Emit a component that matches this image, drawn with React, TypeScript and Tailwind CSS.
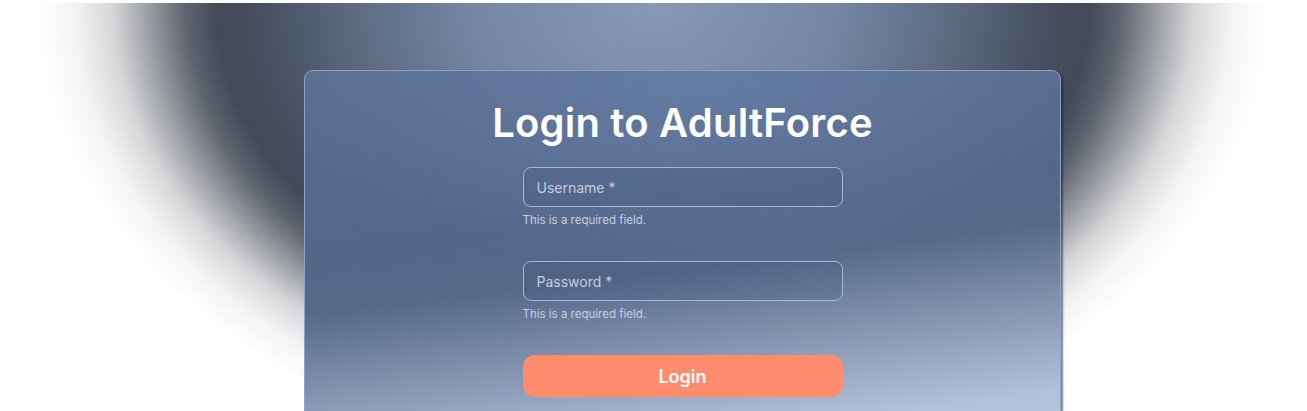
export default function App() {
  return (
    <div className="w-full h-[411px] bg-white pt-[3px] overflow-hidden" style={{ fontFamily: "Inter, 'Noto Sans', sans-serif" }}>
      <div className="h-[408px] overflow-hidden bg-[radial-gradient(ellipse_615px_460px_at_653px_0px,#8799b7_0%,#7486a4_30%,#5b687f_50%,#474f60_64%,#434a58_71%,#5f656f_76%,#9a9da3_82%,#d5d7d9_88%,#f3f3f4_94%,#ffffff_100%)]">
        <div className="ml-[304px] mt-[67px] w-[757px] h-[380px] rounded-[9px] border border-[#8ea3c6] shadow-[2px_1px_2px_rgba(20,25,35,0.55)] bg-[radial-gradient(ellipse_420px_200px_at_52%_0%,rgba(112,138,180,0.55),rgba(112,138,180,0)_100%),linear-gradient(173deg,#5a6e92_0%,#536788_40%,#566a8a_52%,#8b9bb7_72%,#b2c1dc_88%,#b9c8e1_100%)] flex flex-col items-center pt-[28px]">
          <h1 className="text-[40px] leading-[48px] font-semibold text-white tracking-[0.2px]">Login to AdultForce</h1>

          <div className="w-[320px] mt-[20px] flex flex-col">
            <input
              type="text"
              placeholder="Username *"
              className="h-[40px] w-full rounded-[8px] border border-[#a6b8da] bg-[rgba(55,75,115,0.18)] px-[13px] text-[14px] text-white placeholder:text-[#c3cde0] outline-none"
            />
            <p className="mt-[5px] text-[11.5px] leading-[16px] text-[#c6cfe0]">This is a required field.</p>
          </div>

          <div className="w-[320px] mt-[33px] flex flex-col">
            <input
              type="password"
              placeholder="Password *"
              className="h-[40px] w-full rounded-[8px] border border-[#a6b8da] bg-[rgba(55,75,115,0.18)] px-[13px] text-[14px] text-white placeholder:text-[#c3cde0] outline-none"
            />
            <p className="mt-[5px] text-[11.5px] leading-[16px] text-[#c6cfe0]">This is a required field.</p>
          </div>

          <button className="mt-[33px] w-[320px] h-[42px] rounded-[12px] bg-[#ff8c6c] text-white text-[18px] font-semibold">
            Login
          </button>
        </div>
      </div>
    </div>
  );
}
